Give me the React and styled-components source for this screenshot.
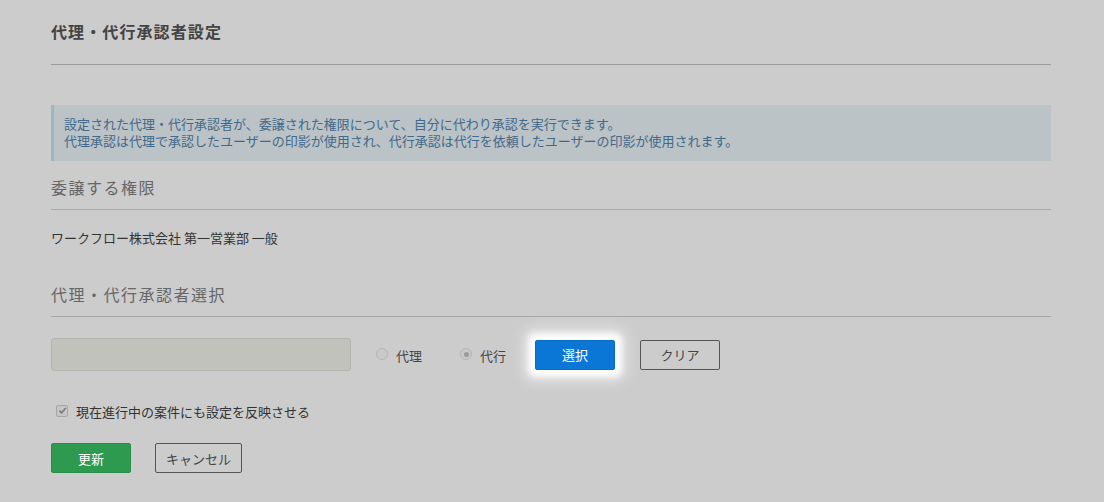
import React from "react";
import styled, { createGlobalStyle } from "styled-components";

const GlobalStyle = createGlobalStyle`
  html, body {
    margin: 0;
    padding: 0;
    background: #cccccc;
  }
  body {
    font-family: "Noto Sans CJK JP", "Noto Sans", sans-serif;
    color: #333;
  }
`;

const App = () => {
  return (
    <>
      <GlobalStyle />
      <Page>
        <Title>代理・代行承認者設定</Title>
        <Rule />
        <Info>
          <p>設定された代理・代行承認者が、委譲された権限について、自分に代わり承認を実行できます。</p>
          <p>代理承認は代理で承認したユーザーの印影が使用され、代行承認は代行を依頼したユーザーの印影が使用されます。</p>
        </Info>
        <SectionHead>委譲する権限</SectionHead>
        <SectionRule />
        <Authority>ワークフロー株式会社 第一営業部 一般</Authority>
        <SectionHead top={37}>代理・代行承認者選択</SectionHead>
        <SectionRule />
        <PickRow>
          <NameBox />
          <Radio>
            <RadioDot />
            代理
          </Radio>
          <Radio>
            <RadioDot checked />
            代行
          </Radio>
          <SelectButton>選択</SelectButton>
          <OutlineButton>クリア</OutlineButton>
        </PickRow>
        <CheckRow>
          <CheckBox>
            <svg width="9" height="9" viewBox="0 0 10 10">
              <path d="M1.5 5.2 L4 7.6 L8.6 2.2" fill="none" stroke="#7a7a7a" strokeWidth="1.8" />
            </svg>
          </CheckBox>
          現在進行中の案件にも設定を反映させる
        </CheckRow>
        <Actions>
          <SubmitButton>更新</SubmitButton>
          <OutlineButton wide>キャンセル</OutlineButton>
        </Actions>
      </Page>
    </>
  );
};

export default App;

const Page = styled.div`
  width: 1000px;
  margin-left: 51px;
  padding-top: 20px;
`;

const Title = styled.h1`
  margin: 0;
  font-size: 16px;
  font-weight: bold;
  letter-spacing: 1.1px;
  color: #444;
  line-height: 22px;
`;

const Rule = styled.div`
  height: 1px;
  background: #9c9c9c;
  margin-top: 22px;
`;

const Info = styled.div`
  margin-top: 40px;
  background: #bcc3c7;
  border-left: 3px solid #9db6c6;
  padding: 10px 10px 12px 10px;
  p {
    margin: 0;
    font-size: 13px;
    line-height: 17px;
    color: #40698a;
  }
`;

const SectionHead = styled.h2`
  margin: ${(p) => p.top || 16}px 0 0;
  font-size: 16px;
  font-weight: normal;
  letter-spacing: 1.5px;
  color: #666;
  line-height: 20px;
`;

const SectionRule = styled.div`
  height: 1px;
  background: #a8a8a8;
  margin-top: 12px;
`;

const Authority = styled.div`
  margin-top: 19px;
  font-size: 13px;
  line-height: 18px;
  color: #333;
`;

const PickRow = styled.div`
  display: flex;
  align-items: center;
  margin-top: 21px;
  height: 33px;
`;

const NameBox = styled.div`
  width: 298px;
  height: 31px;
  background: #c2c2bc;
  border: 1px solid #b4b4b0;
  border-radius: 3px;
  margin-right: 25px;
`;

const Radio = styled.label`
  display: flex;
  align-items: center;
  font-size: 13px;
  color: #444;
  margin-right: 38px;
  margin-top: 2px;
  &:last-of-type {
    margin-right: 0;
  }
`;

const RadioDot = styled.span`
  width: 12px;
  height: 12px;
  border-radius: 50%;
  border: 1px solid #b5b5b5;
  background: #c9c9c9;
  box-sizing: border-box;
  margin-right: 8px;
  margin-top: -3px;
  display: flex;
  align-items: center;
  justify-content: center;
  &::after {
    content: "";
    width: 5px;
    height: 5px;
    border-radius: 50%;
    background: ${(p) => (p.checked ? "#9a9a9a" : "transparent")};
  }
`;

const SelectButton = styled.button`
  width: 80px;
  height: 30px;
  margin-left: 29px;
  margin-right: 25px;
  background: #0a77d6;
  color: #fff;
  border: 1px solid #0a6cc4;
  border-radius: 2px;
  font-family: inherit;
  font-size: 13px;
  box-shadow: 0 0 6px 6px #fff, 0 0 14px 10px rgba(255, 255, 255, 0.6);
`;

const OutlineButton = styled.button`
  width: ${(p) => (p.wide ? 87 : 80)}px;
  height: 30px;
  background: transparent;
  color: #444;
  border: 1px solid #555;
  border-radius: 2px;
  font-family: inherit;
  font-size: 13px;
`;

const CheckRow = styled.label`
  display: flex;
  align-items: center;
  margin-top: 32px;
  padding-left: 5px;
  font-size: 13px;
  color: #333;
  line-height: 18px;
`;

const CheckBox = styled.span`
  width: 10px;
  height: 10px;
  border: 1px solid #a6a6a6;
  border-radius: 2px;
  background: #c6c6c6;
  display: flex;
  align-items: center;
  justify-content: center;
  margin-right: 8px;
  margin-top: -3px;
`;

const Actions = styled.div`
  display: flex;
  gap: 24px;
  margin-top: 22px;
`;

const SubmitButton = styled.button`
  width: 80px;
  height: 30px;
  background: #2e9a4f;
  color: #fff;
  border: 1px solid #2a8c48;
  border-radius: 2px;
  font-family: inherit;
  font-size: 13px;
`;
